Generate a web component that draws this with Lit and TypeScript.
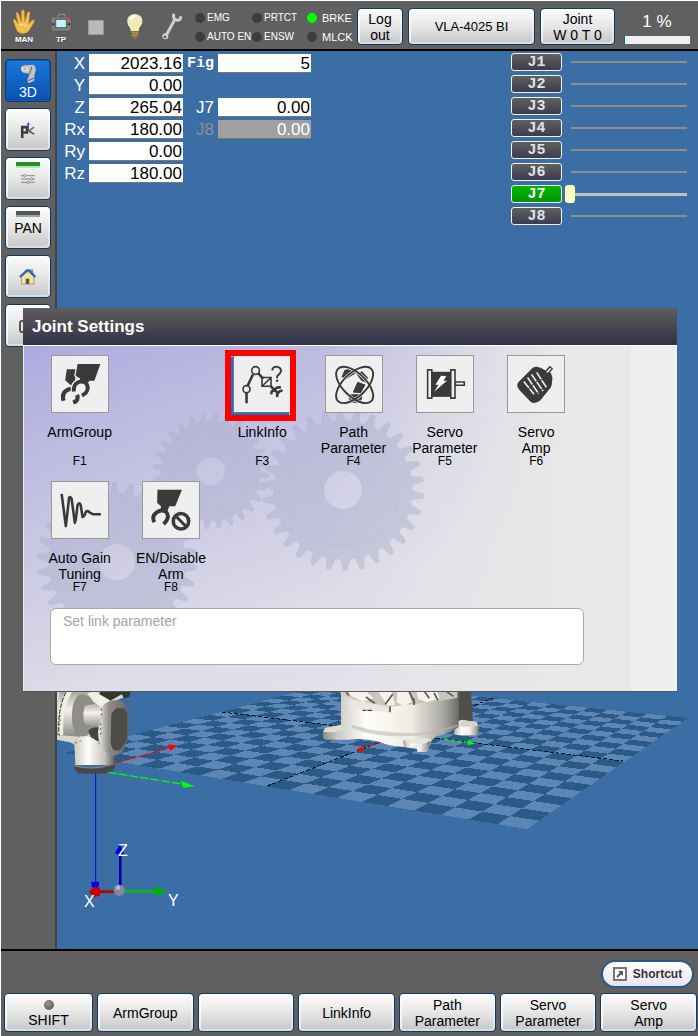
import { LitElement, html, svg, css, nothing } from "lit";
import type { SVGTemplateResult } from "lit";
import { customElement, property } from "lit/decorators.js";
import { classMap } from "lit/directives/class-map.js";

type Pt = [number, number];

/* Maps the unit square onto the quad a(0,0) b(1,0) c(1,1) d(0,1). */
function quadMap(a: Pt, b: Pt, c: Pt, d: Pt) {
  const dx1 = b[0] - c[0], dx2 = d[0] - c[0], dx3 = a[0] - b[0] + c[0] - d[0];
  const dy1 = b[1] - c[1], dy2 = d[1] - c[1], dy3 = a[1] - b[1] + c[1] - d[1];
  const det = dx1 * dy2 - dx2 * dy1;
  const g = (dx3 * dy2 - dx2 * dy3) / det;
  const h = (dx1 * dy3 - dx3 * dy1) / det;
  return (u: number, v: number): Pt => {
    const w = g * u + h * v + 1;
    return [
      ((b[0] - a[0] + g * b[0]) * u + (d[0] - a[0] + h * d[0]) * v + a[0]) / w,
      ((b[1] - a[1] + g * b[1]) * u + (d[1] - a[1] + h * d[1]) * v + a[1]) / w,
    ];
  };
}

const floor = quadMap([64, 753], [527, 829], [688, 718], [336, 682]);
const at = (u: number, v: number) => floor(u, v).map((n) => n.toFixed(1)).join(" ");
const TILES = 20;

function darkTiles(): string {
  let d = "";
  for (let i = 0; i < TILES; i++) {
    for (let j = 0; j < TILES; j++) {
      if ((i + j) % 2 !== 0) continue;
      const u = i / TILES, v = j / TILES, s = 1 / TILES;
      d += `M${at(u, v)}L${at(u + s, v)}L${at(u + s, v + s)}L${at(u, v + s)}Z`;
    }
  }
  return d;
}

function gearPath(cx: number, cy: number, r: number, hole: number, teeth: number): string {
  const tooth = r * 0.14;
  const step = (Math.PI * 2) / teeth;
  const p = (rad: number, ang: number) =>
    `${(cx + rad * Math.cos(ang)).toFixed(1)} ${(cy + rad * Math.sin(ang)).toFixed(1)}`;
  let d = "";
  for (let i = 0; i < teeth; i++) {
    const t = i * step;
    d += `${i ? "L" : "M"}${p(r - tooth, t)}L${p(r, t + step * 0.24)}L${p(r, t + step * 0.5)}L${p(r - tooth, t + step * 0.68)}`;
  }
  return `${d}ZM${cx - hole} ${cy}a${hole} ${hole} 0 1 0 ${hole * 2} 0a${hole} ${hole} 0 1 0 ${-hole * 2} 0Z`;
}

@customElement("robot-scene")
export class RobotScene extends LitElement {
  static styles = css`
    :host { display: block; overflow: hidden; }
    .view { display: block; width: 100%; height: 100%; }
    .axis-text { font: 16px "Liberation Sans", Arial, sans-serif; fill: #fff; }
  `;

  render() {
    return html`<svg class="view" viewBox="57 51 641 898" preserveAspectRatio="xMinYMax slice" role="img" aria-label="3D view of the robot">
      <defs>
        <linearGradient id="body"><stop offset="0" stop-color="#8b8b85"/><stop offset=".1" stop-color="#c9c8c2"/><stop offset=".32" stop-color="#fffef8"/><stop offset=".65" stop-color="#eeece4"/><stop offset=".88" stop-color="#aaa9a2"/><stop offset="1" stop-color="#6d6c67"/></linearGradient>
        <linearGradient id="neck"><stop offset="0" stop-color="#c8c7c0"/><stop offset=".35" stop-color="#fffef8"/><stop offset=".75" stop-color="#c4c3bb"/><stop offset="1" stop-color="#5f5e5a"/></linearGradient>
        <linearGradient id="drum" x2="0" y2="1"><stop offset="0" stop-color="#a6a59f"/><stop offset=".4" stop-color="#f4f2ea"/><stop offset="1" stop-color="#8b8a84"/></linearGradient>
        <linearGradient id="cap"><stop offset="0" stop-color="#eeece4"/><stop offset=".35" stop-color="#8f8e88"/><stop offset="1" stop-color="#65645f"/></linearGradient>
      </defs>
      <g shape-rendering="crispEdges">
        <path d="M64 753L527 829L688 718L336 682Z" fill="#5c86b4"/>
        <path d=${darkTiles()} fill="#2c5a88"/>
        <path d="M267 786L493 698M222 712L623 761" fill="none" stroke="#0c1620" stroke-dasharray="4 2"/>
      </g>

      <g transform="translate(280 685) scale(.3333)">
        <path d="M536 18H573L579 108L536 130Z" fill="#4f4e4a"/>
        <path d="M532 110L545 104L590 112L597 125V140L590 151H536L520 148Z" fill="url(#body)"/>
        <path d="M545 106L590 110L595 122L560 126L537 122Z" fill="#d5d3cb"/>
        <path d="M183 18H536V126Q500 150 470 153Q450 165 447 190L440 200H415L410 192L372 186Q340 184 318 178L290 168Q240 158 206 164H136L129 158V136L136 128L183 120Z" fill="url(#body)"/>
        <path d="M183 120L136 128L131 140Q160 146 190 134Z" fill="#dedcd4"/>
        <path d="M215 120Q320 150 440 143L536 118V124Q440 160 330 153Q260 149 215 128Z" fill="#b9b7ae" opacity=".55"/>
        <path d="M190 30L230 48L320 66L400 58L480 48L532 38V18H190Z" fill="#c8c6be"/>
        <path d="M213 50L230 46L330 66V82L213 72Z" fill="#e9e7df"/>
        <path d="M205 20H260L280 40L250 50L215 34ZM295 20H335L345 60L322 62ZM352 20H385L395 50L372 64L350 52ZM410 20H470L480 40L440 52L415 42Z" fill="#f5f3eb"/>
        <path d="M258 36L285 55M316 58L338 28M330 64V82M388 20L404 55M402 40V60M434 20L448 40M462 24L474 46M500 20L520 34M199 20L206 32" fill="none" stroke="#5a5954" stroke-width="5"/>
        <path d="M248 76H258M262 76H276" stroke="#111" stroke-width="3"/>
        <path d="M370 166L398 160L450 168L447 192L440 200H412V182L372 186Z" fill="url(#body)"/>
        <path d="M372 164L440 160L454 166L430 178L380 174Z" fill="#e6e4dc"/>
        <path d="M250 186L297 175" stroke="#f00" stroke-width="3" stroke-dasharray="10 4"/>
        <path d="M231 194L240 186L252 189L249 198L236 200Z" fill="#f00"/>
        <path d="M492 163L560 172" stroke="#0f0" stroke-width="4" stroke-dasharray="14 6"/>
        <path d="M562 165L588 176L562 180Z" fill="#0f0"/>
      </g>

      <g transform="translate(50 685) scale(.3333)">
        <path d="M21 20H235L240 30L225 35L190 50V200L170 170L100 178L82 182L60 172L21 164Z" fill="#d9d7cf"/>
        <path d="M150 20H242L238 36L222 40L215 28L180 48L145 40Z" fill="#35352f"/>
        <path d="M28 20H125L105 45L90 155L21 150Z" fill="url(#drum)"/>
        <path d="M48 20Q20 60 24 150H40Q36 70 66 20Z" fill="#efede5"/>
        <path d="M48 22Q22 70 27 152" fill="none" stroke="#22221f" stroke-width="3" stroke-dasharray="14 4"/>
        <path d="M100 28Q78 24 68 65Q60 130 84 154H108L148 130V46Z" fill="#8e8d87"/>
        <path d="M105 62Q95 90 105 118L155 130V52Z" fill="url(#drum)"/>
        <path d="M112 24L135 20L180 46L152 66L130 50Z" fill="#f1efe7"/>
        <path d="M115 136Q142 116 158 140L150 170L124 162Z" fill="#45443f"/>
        <path d="M72 164L102 155Q130 150 150 180L194 208V240H76Z" fill="url(#neck)"/>
        <path d="M160 60Q175 44 210 46Q236 54 237 110Q236 172 214 204L190 213L160 196Q146 186 144 140Z" fill="url(#cap)"/>
        <path d="M184 86L198 70H222L232 86V162L210 196H190L182 176Z" fill="#4c4b46"/>
        <path d="M154 72V98M152 116V150M76 174L92 168M30 90V120" stroke="#33332e" stroke-width="3" stroke-dasharray="4 10"/>
        <path d="M72 242Q130 256 194 236V252Q182 264 150 266H88Q74 262 72 242Z" fill="#48484a"/>
        <path d="M72 242Q130 258 194 236" fill="none" stroke="#84837d" stroke-width="4"/>
        <path d="M137 266V590" stroke="#00f" stroke-width="3"/>
        <path d="M124 590H147V602L140 612H130L124 602Z" fill="#00f"/>
        <path d="M190 236L356 190" stroke="#f00" stroke-width="3" stroke-dasharray="16 3"/>
        <path d="M354 178L384 182L360 197Z" fill="#f00"/>
        <path d="M175 262L395 297" stroke="#0f0" stroke-width="4" stroke-dasharray="26 6"/>
        <path d="M392 288L435 303L400 309Z" fill="#0f0"/>
        <path d="M211 608V505" stroke="#00a" stroke-width="8"/>
        <path d="M210 478L222 505L208 512L195 504Z" fill="#0000e6"/>
        <path d="M150 620H200" stroke="#c00000" stroke-width="8"/>
        <path d="M116 622L134 604L150 608V632L134 636Z" fill="#c80000"/>
        <path d="M220 619H318" stroke="#00c400" stroke-width="7"/>
        <path d="M315 602L351 621L315 634Z" fill="#00b000"/>
        <circle cx="208" cy="616" r="17" fill="#8584a0"/><circle cx="204" cy="608" r="7" fill="#b5b4c6"/>
      </g>
      <text class="axis-text" x="118" y="856">Z</text>
      <text class="axis-text" x="84" y="907">X</text>
      <text class="axis-text" x="168" y="906">Y</text>
    </svg>`;
  }
}

const DARK = "#3a3a3a";

const tileIcons: Record<string, SVGTemplateResult> = {
  arms: svg`<svg class="glyph" viewBox="63 45 174 174" aria-hidden="true">
    <path d="M109 86H138L134 128L124 138L104 120Z" fill=${DARK}/>
    <path d="M99 184Q90 154 122 147" fill="none" stroke=${DARK} stroke-width="13"/>
    <path d="M141 166Q148 182 129 190" fill="none" stroke=${DARK} stroke-width="13"/>
    <path d="M141 68H216L196 124H176L162 116H146L134 106Z" fill=${DARK} stroke="#efefef" stroke-width="4"/>
    <path d="M131 158Q126 130 148 124Q176 122 175 146Q173 160 158 168" fill="none" stroke="#efefef" stroke-width="18"/>
    <path d="M131 155Q128 132 148 125Q174 122 174 146Q172 160 156 168" fill="none" stroke=${DARK} stroke-width="12"/>
    <path d="M150 110H178V126H150Z" fill=${DARK}/>
  </svg>`,
  link: svg`<svg class="glyph" viewBox="611 45 174 174" aria-hidden="true">
    <g fill="none" stroke=${DARK} stroke-width="8">
      <path d="M650 192V160M654 136L670 102M686 98L702 116"/>
      <circle cx="650" cy="148" r="11" stroke-width="5"/><circle cx="678" cy="90" r="12" stroke-width="5"/>
      <path d="M698 112H726V139H698ZM698 139L726 112" stroke-width="5"/>
      <path d="M724 138L738 152M757 143Q740 140 738 152Q724 152 728 164M738 152L748 160Q742 164 747 172M748 160Q754 150 762 154"/>
      <path d="M730 90Q730 78 744 78Q757 80 757 92Q756 99 745 108V114" stroke-width="6"/>
    </g>
    <circle cx="745" cy="122" r="4" fill=${DARK}/>
  </svg>`,
  path: svg`<svg class="glyph" viewBox="48 45 174 174" aria-hidden="true">
    <path d="M106 88L134 84L142 98L112 116L96 110ZM142 100L160 92L178 112L174 128L158 122ZM146 126L170 134L156 160L132 158ZM124 164H160V178L150 190H132L118 178Z" fill=${DARK}/>
    <g fill="none" stroke="#efefef" stroke-width="10"><ellipse cx="137" cy="135" rx="72" ry="36" transform="rotate(44 137 135)"/><ellipse cx="137" cy="135" rx="72" ry="36" transform="rotate(-44 137 135)"/></g>
    <path d="M146 126L170 134L156 160L132 158Z" fill=${DARK}/>
    <g fill="none" stroke=${DARK} stroke-width="6"><ellipse cx="137" cy="135" rx="72" ry="36" transform="rotate(44 137 135)"/><ellipse cx="137" cy="135" rx="72" ry="36" transform="rotate(-44 137 135)"/></g>
  </svg>`,
  servo: svg`<svg class="glyph" viewBox="321 45 174 174" aria-hidden="true">
    <path d="M366 94H428V172H366Z" fill=${DARK}/>
    <path d="M354 88H367V176H354ZM426 88H439V176H426ZM440 126H468V136H440Z" fill="#efefef" stroke=${DARK} stroke-width="5"/>
    <path d="M396 106L412 108L403 122H414L374 156L388 134H378Z" fill="#fff"/>
  </svg>`,
  amp: svg`<svg class="glyph" viewBox="595 45 174 174" aria-hidden="true">
    <path d="M674 84Q684 78 698 86L712 94L726 100L730 112L728 134Q726 144 718 150L694 180Q680 192 668 186L634 150Q622 138 630 128L650 108Z" fill=${DARK} stroke=${DARK} stroke-width="6" stroke-linejoin="round"/>
    <path d="M714 98L730 80" stroke=${DARK} stroke-width="14"/><path d="M716 96L728 83" stroke="#efefef" stroke-width="5"/>
    <path d="M644 124L676 164M656 112L690 162M668 102L704 154M684 96L714 142" stroke="#efefef" stroke-width="5" stroke-dasharray="26 3"/>
  </svg>`,
  gain: svg`<svg class="glyph" viewBox="63 33 174 174" aria-hidden="true">
    <path d="M93 70L106 170Q112 120 116 82Q120 76 124 86L134 160Q138 150 142 106Q147 94 152 104L158 142Q164 140 168 126Q174 120 180 128L190 133H215" fill="none" stroke=${DARK} stroke-width="8" stroke-linejoin="round"/>
  </svg>`,
  disable: svg`<svg class="glyph" viewBox="340 33 174 174" aria-hidden="true">
    <path d="M385 57H461L440 108H422L416 122H394L396 108L384 98Z" fill=${DARK}/>
    <path d="M375 158Q366 138 382 128Q396 116 412 126Q426 142 404 164" fill="none" stroke=${DARK} stroke-width="12"/>
    <circle cx="458" cy="155" r="31" fill="#efefef"/>
    <circle cx="458" cy="155" r="24" fill="#efefef" stroke=${DARK} stroke-width="11"/>
    <path d="M442 139L474 171" stroke=${DARK} stroke-width="9"/>
  </svg>`,
};

@customElement("menu-tile")
export class MenuTile extends LitElement {
  @property() icon = "";
  @property() label = "";
  @property() shortcut = "";
  @property({ type: Boolean }) selected = false;

  static styles = css`
    :host { display: block; }
    .tile { display: flex; flex-direction: column; align-items: center; width: 100%; padding: 0; border: 0; background: none; color: #000; font: 14px/16px "Liberation Sans", Arial, sans-serif; }
    .frame { position: relative; box-sizing: border-box; width: 58px; height: 58px; border: 1px solid #999; background: #efefef; }
    .frame.selected { border-color: #777; box-shadow: -2px 2px 0 #0a78d4; }
    .frame.selected::after { content: ""; position: absolute; inset: -6px -6px -9px -9px; border: 6px solid #f00; }
    .glyph { display: block; width: 100%; height: 100%; }
    .label { height: 32px; margin-top: 11px; white-space: pre-line; }
    .key { font-size: 12px; line-height: 11px; }
  `;

  render() {
    return html`<button class="tile">
      <span class=${classMap({ frame: true, selected: this.selected })}>${tileIcons[this.icon]}</span>
      <span class="label">${this.label}</span><span class="key">${this.shortcut}</span>
    </button>`;
  }
}

const tiles = [
  { icon: "arms", label: "ArmGroup", key: "F1" },
  null,
  { icon: "link", label: "LinkInfo", key: "F3", selected: true },
  { icon: "path", label: "Path\nParameter", key: "F4" },
  { icon: "servo", label: "Servo\nParameter", key: "F5" },
  { icon: "amp", label: "Servo\nAmp", key: "F6" },
  { icon: "gain", label: "Auto Gain\nTuning", key: "F7" },
  { icon: "disable", label: "EN/Disable\nArm", key: "F8" },
];

@customElement("joint-settings")
export class JointSettings extends LitElement {
  static styles = css`
    :host { display: block; box-shadow: 0 1px 0 #555; }
    .title { margin: 0; padding: 0 9px; font: bold 17px/37px "Liberation Sans", Arial, sans-serif; color: #fff; background: linear-gradient(#5e5e5e, #4a4a50 45%, #30304a); border-bottom: 1px solid #fff; }
    .body { position: relative; overflow: hidden; padding: 9px 0 26px 10px; border-left: 1px solid #eee; box-sizing: border-box;
      background: linear-gradient(90deg, transparent 93%, #efefef 93%), linear-gradient(90deg, transparent 45%, #e8e8e8 82%), linear-gradient(160deg, #adabde 0%, #c6c5e2 32%, #dddce8 62%, #e8e8ec 100%); }
    .gears { position: absolute; left: 0; top: 0; width: 654px; height: 345px; }
    .tiles { position: relative; display: grid; grid-template-columns: repeat(6, 14.2%); row-gap: 14px; }
    .hint { position: relative; display: block; box-sizing: border-box; width: 83%; height: 57px; margin: 15px 0 0 16px; padding: 4px 12px; resize: none; border: 1px solid #aaa; border-radius: 6px; background: #fff; color: #a5a5a5; font: 14px/16px "Liberation Sans", Arial, sans-serif; outline: 0; }
  `;

  render() {
    return html`
      <h1 class="title">Joint Settings</h1>
      <div class="body">
        <svg class="gears" viewBox="23 346 654 345" aria-hidden="true">
          <g fill="#a9aecb" fill-opacity=".45" fill-rule="evenodd">
            <path d=${gearPath(210, 471, 58, 14, 28)}/>
            <path d=${gearPath(342, 490, 81, 19, 30)}/>
            <path d=${gearPath(116, 562, 80, 18, 30)}/>
          </g>
          <g fill="none" stroke="#9da3c4" stroke-opacity=".15">
            <circle cx="210" cy="471" r="39"/><circle cx="342" cy="490" r="56"/><circle cx="116" cy="562" r="55"/>
          </g>
        </svg>
        <div class="tiles">
          ${tiles.map((t) => t
            ? html`<menu-tile .icon=${t.icon} .label=${t.label} .shortcut=${t.key} .selected=${!!t.selected}></menu-tile>`
            : html`<span></span>`)}
        </div>
        <textarea class="hint" readonly aria-label="Description">Set link parameter</textarea>
      </div>`;
  }
}

const toolIcons = [
  { name: "Manual", icon: svg`<svg class="tool-icon" viewBox="38 30 72 100"><path d="M52 96L42 68Q41 60 47 63L56 76L50 46Q52 38 58 46L66 70L66 38Q71 30 75 38L77 70L84 42Q90 36 92 44L88 76L98 66Q106 62 106 69L90 96Q84 106 70 106Q58 106 52 96Z" fill="#f3bd4f" stroke="#b8822c" stroke-width="2"/><path d="M60 80Q68 76 84 84" fill="none" stroke="#fbdc8c" stroke-width="5"/></svg>`, text: "MAN" },
  { name: "Teach pendant", icon: svg`<svg class="tool-icon" viewBox="144 30 72 100"><path d="M168 56L174 48H190L194 56" fill="none" stroke="#8a8a8a" stroke-width="4"/><rect x="150" y="56" width="60" height="42" rx="6" fill="#7c8083" stroke="#555" stroke-width="2"/><rect x="164" y="63" width="32" height="25" fill="#c9f1fa" stroke="#4d5a60" stroke-width="3"/><circle cx="203" cy="60" r="5" fill="#e83a32"/><path d="M153 78H160M200 78H207" stroke="#333" stroke-width="6"/></svg>`, text: "TP" },
  { name: "Stop", icon: svg`<svg class="tool-icon" viewBox="257 30 72 100"><rect x="264" y="66" width="45" height="43" fill="#b9b9b9" stroke="#9c9c9c" stroke-width="2"/></svg>`, text: "" },
  { name: "Lamp", icon: svg`<svg class="tool-icon" viewBox="369 30 72 100"><path d="M392 98Q392 88 384 80Q378 62 388 53Q404 40 422 54Q432 66 424 80Q416 88 416 98Z" fill="#f2ebb8"/><path d="M392 64Q396 54 406 54" stroke="#fff" stroke-width="7" fill="none"/><path d="M394 98H416L413 114L405 124L397 114Z" fill="#94742f"/><path d="M394 104H415M396 111H413" stroke="#d9b765" stroke-width="2"/></svg>`, text: "" },
  { name: "Maintenance", icon: svg`<svg class="tool-icon" viewBox="480 30 72 100"><path d="M496 116L526 60M522 46Q516 62 532 66M530 66Q544 66 542 54" fill="none" stroke="#cfcfcf" stroke-width="9"/><circle cx="496" cy="114" r="9" fill="#cfcfcf"/><circle cx="495" cy="116" r="4" fill="#555"/></svg>`, text: "" },
];

const leds = [
  { text: "EMG" }, { text: "PRTCT" }, { text: "BRKE", on: true, wide: true },
  { text: "AUTO EN" }, { text: "ENSW" }, { text: "MLCK", wide: true },
];

const readouts = [
  [["X", "2023.16"], ["Fig", "5"]],
  [["Y", "0.00"]],
  [["Z", "265.04"], ["J7", "0.00"]],
  [["Rx", "180.00"], ["J8", "0.00"]],
  [["Ry", "0.00"]],
  [["Rz", "180.00"]],
];

const sliderBars = svg`<path d="M64 122H106M64 132H106M64 142H106" stroke="#8a8a8a" stroke-width="3"/><g fill="#d8d8d8" stroke="#808080" stroke-width="2"><circle cx="75" cy="122" r="4"/><circle cx="95" cy="132" r="4"/><circle cx="84" cy="142" r="4"/></g>`;

const sideItems = [
  { name: "3D", active: true, text: "3D", icon: svg`<svg class="robot" viewBox="60 38 52 62" aria-hidden="true"><path d="M62 52Q64 42 78 42L100 40Q110 44 108 60L104 74V90L86 98L82 88L90 68L76 66Q64 66 62 52Z" fill="#c9c6c2"/><path d="M66 50H84L82 60H68Z" fill="#f2eeea"/><path d="M70 54H80" stroke="#d44" stroke-width="3"/><path d="M90 68L96 46M84 90L102 82" stroke="#77736e" stroke-width="4"/></svg>` },
  { name: "Position", icon: svg`<svg class="small" viewBox="61 205 52 56" aria-hidden="true"><path d="M69 258V224H84V241H69" fill="none" stroke="#3c3c3c" stroke-width="8"/><path d="M88 236V214" stroke="#33c" stroke-width="3"/><path d="M83 217L88 209L93 217Z" fill="#33c"/><path d="M90 236L106 224" stroke="#2c9a4a" stroke-width="5"/><path d="M90 236L106 246" stroke="#b03030" stroke-width="5"/></svg>` },
  { name: "Adjust", bar: "green", icon: svg`<svg class="small" viewBox="58 108 54 48" aria-hidden="true">${sliderBars}</svg>` },
  { name: "Pan", bar: "gray", text: "PAN" },
  { name: "Home", icon: svg`<svg class="small" viewBox="59 270 54 54" aria-hidden="true"><path d="M66 296L86 280L104 296V318H66Z" fill="#f5e3a2" stroke="#8a7b4d" stroke-width="2"/><path d="M93 274H102V286H93Z" fill="#8a94ad"/><path d="M62 297L82 278Q86 276 90 278L108 297" fill="none" stroke="#2f62bd" stroke-width="7"/><path d="M79 302H90V318H79Z" fill="#5d584e"/></svg>` },
  { name: "Camera", icon: svg`<svg class="small" viewBox="0 0 18 18" aria-hidden="true"><rect x="1" y="4" width="16" height="11" rx="2" fill="none" stroke="#555" stroke-width="2"/><circle cx="9" cy="9" r="3" fill="#777"/></svg>` },
];

const footerKeys = ["ArmGroup", "", "LinkInfo", "Path\nParameter", "Servo\nParameter", "Servo\nAmp"];

@customElement("app-root")
export class AppRoot extends LitElement {
  static styles = css`
    :host { display: flex; flex-direction: column; box-sizing: border-box; min-height: 100vh; padding: 1px 0 0 1px; background: #fff; font: 14px/16px "Liberation Sans", Arial, sans-serif; color: #000; }
    button { font: inherit; color: inherit; padding: 0; }
    .key { box-sizing: border-box; border: 1px solid #0a3a6e; border-radius: 4px; background: linear-gradient(#fdfdfd, #e6e6e6 50%, #c6c6c6); box-shadow: inset 2px 2px 0 #ffffffb0, inset -2px -2px 0 #ffffff60; white-space: pre-line; text-align: center; }

    .top { display: flex; align-items: center; height: 48px; padding-left: 11px; background: #606060; border-bottom: 2px solid #000; }
    .tools { display: flex; gap: 13px; }
    .tool { position: relative; width: 24px; height: 34px; border: 0; background: none; }
    .tool-icon { display: block; width: 24px; height: 34px; overflow: visible; }
    .tool-text { position: absolute; left: -4px; right: -4px; bottom: -2px; color: #fff; font: bold 8px/8px "Liberation Sans", Arial, sans-serif; text-shadow: 0 1px 0 #444; }
    .leds { display: grid; grid-template-columns: 57px 55px 50px; row-gap: 3px; margin-left: 11px; padding-top: 5px; }
    .led { display: flex; align-items: center; gap: 2px; color: #fff; font-size: 10px; white-space: nowrap; }
    .led.wide { gap: 5px; font-size: 11px; }
    .dot { flex: none; width: 10px; height: 10px; border-radius: 50%; background: #3c3c3c; }
    .dot.on { background: #0f0; }
    .top-keys { display: flex; flex: 1; gap: 5px; height: 37px; padding-top: 3px; }
    .logout { width: 46px; }
    .model { flex: 1; font-size: 13px; }
    .mode { width: 75px; }
    .speed { display: flex; flex-direction: column; gap: 4px; width: 66px; margin: 0 8px 0 9px; text-align: center; color: #fff; font-size: 17px; line-height: 20px; padding-top: 6px; }
    .rate { display: block; width: 100%; height: 8px; appearance: none; border: 0; background: #efefef; }
    .rate::-webkit-progress-bar { background: #efefef; }
    .rate::-webkit-progress-value { background: #0a64b8; }

    .middle { display: flex; flex: 1; }
    .side { display: flex; flex-direction: column; gap: 6px; flex: none; width: 56px; box-sizing: border-box; padding: 8px 4px; background: #606060; border-right: 2px solid #444; }
    .side-key { display: flex; flex-direction: column; align-items: center; justify-content: center; position: relative; width: 46px; height: 43px; }
    .side-key.active { background: linear-gradient(#1a78d8, #0a50b0); box-shadow: inset 0 0 0 1px #0a5cc0; color: #fff; }
    .strip { position: absolute; top: 4px; left: 10px; right: 10px; height: 6px; }
    .strip.green { background: linear-gradient(#2c8c2c 60%, #a6f0b4 60%); }
    .strip.gray { background: linear-gradient(#4c5a5a 60%, #9ca4a4 60%); }
    .robot { width: 17px; height: 20px; margin-top: 2px; }
    .small { width: 18px; height: 18px; }

    .stage { position: relative; flex: 1; display: flex; justify-content: space-between; align-items: flex-start; background: #3b6ea5; }
    .scene { position: absolute; inset: 0; }
    .readouts { position: relative; display: grid; gap: 3px; padding: 3px 0 0 4px; font-size: 17px; line-height: 19px; color: #fff; }
    .row { display: grid; grid-template-columns: 24px 94px 27px 93px; column-gap: 4px; }
    .name { text-align: right; }
    .name.fig { font: bold 15px/19px "Liberation Mono", monospace; }
    .name.off { color: #8a8f96; }
    .value { box-sizing: border-box; width: 100%; height: 19px; padding: 0 1px; border: 0; border-bottom: 1px solid #777; border-radius: 0; background: #fff; color: #000; font: inherit; text-align: right; outline: 0; }
    .value.off { background: #a0a0a0; color: #fff; }
    .joints { position: relative; display: grid; gap: 4px; padding: 2px 9px 0 0; }
    .joint { display: flex; align-items: center; gap: 3px; height: 18px; }
    .joint-key { box-sizing: border-box; width: 51px; height: 18px; border: 1px solid #f2f2f2; border-radius: 3px; background: linear-gradient(#606060, #3c3c50); color: #e2e2e2; font: bold 15px/15px "Liberation Mono", monospace; }
    .joint-key.on { background: linear-gradient(#00b800, #009400); color: #fff; }
    .axis { appearance: none; width: 124px; height: 18px; margin: 0; background: linear-gradient(#8e8e8e, #8e8e8e) 6px 8px / 116px 2px no-repeat; }
    .axis.on { background: linear-gradient(#c0c0c0, #c0c0c0) 6px 8px / 116px 3px no-repeat; }
    .axis::-webkit-slider-thumb { appearance: none; width: 10px; height: 18px; border-radius: 3px; background: transparent; }
    .axis.on::-webkit-slider-thumb { background: #ffffc0; }
    .window { position: absolute; left: -34px; right: 21px; top: 257px; }

    .bottom { display: flex; flex-direction: column; align-items: flex-end; gap: 5px; padding: 9px 1px 4px 3px; background: #606060; border-top: 2px solid #000; }
    .shortcut { display: flex; align-items: center; justify-content: center; gap: 6px; box-sizing: border-box; width: 93px; height: 28px; margin-right: 3px; border: 2px solid #285a8a; border-radius: 14px; background: linear-gradient(#fff, #e6e4f2); color: #333; font-size: 12px; font-weight: bold; }
    .jump { width: 14px; height: 14px; }
    .keys { display: grid; grid-template-columns: 89px repeat(6, 1fr); gap: 4px; width: 100%; }
    .keys .key { height: 39px; }
    .shift { display: flex; flex-direction: column; align-items: center; justify-content: center; }
    .knob { width: 10px; height: 10px; margin: 2px 0; border-radius: 50%; background: radial-gradient(circle at 40% 35%, #999, #666 60%, #999); }
  `;

  private joint(n: number) {
    const on = n === 7;
    return html`<div class="joint">
      <button class=${classMap({ "joint-key": true, on })}>J${n}</button>
      <input class=${classMap({ axis: true, on })} aria-label=${`J${n} position`} type="range" min="0" max="100" .value=${"0"} ?disabled=${!on}>
    </div>`;
  }

  render() {
    return html`
      <header class="top">
        <div class="tools">${toolIcons.map((t) => html`<button class="tool" aria-label=${t.name}>${t.icon}${t.text ? html`<span class="tool-text">${t.text}</span>` : nothing}</button>`)}</div>
        <div class="leds">${leds.map((l) => html`<span class=${classMap({ led: true, wide: !!l.wide })}><span class=${classMap({ dot: true, on: !!l.on })}></span>${l.text}</span>`)}</div>
        <div class="top-keys">
          <button class="key logout">${"Log\nout"}</button>
          <button class="key model">VLA-4025 BI</button>
          <button class="key mode">${"Joint\nW 0 T 0"}</button>
        </div>
        <div class="speed"><label for="rate">1 %</label><progress class="rate" id="rate" max="100" value="1"></progress></div>
      </header>
      <main class="middle">
        <nav class="side">${sideItems.map((s) => html`<button class=${classMap({ key: true, "side-key": true, active: !!s.active })} aria-label=${s.name}>
          ${s.bar ? html`<span class=${`strip ${s.bar}`}></span>` : nothing}${s.icon ?? nothing}${s.text ? html`<span>${s.text}</span>` : nothing}</button>`)}
        </nav>
        <section class="stage">
          <robot-scene class="scene"></robot-scene>
          <div class="readouts">${readouts.map((row) => html`<div class="row">${row.map(([name, value]) => {
            const off = name === "J8";
            return html`<label class=${classMap({ name: true, off, fig: name === "Fig" })} for=${name}>${name}</label><input class=${classMap({ value: true, off })} id=${name} readonly .value=${value}>`;
          })}</div>`)}</div>
          <div class="joints">${[1, 2, 3, 4, 5, 6, 7, 8].map((n) => this.joint(n))}</div>
          <joint-settings class="window"></joint-settings>
        </section>
      </main>
      <footer class="bottom">
        <button class="shortcut"><svg class="jump" viewBox="0 0 14 14" aria-hidden="true"><rect x="1" y="1" width="12" height="12" fill="#fff" stroke="#777" stroke-width="2"/><path d="M4 10L8 6" stroke="#555" stroke-width="2"/><path d="M5 4H10V9Z" fill="#555"/></svg>Shortcut</button>
        <div class="keys">
          <button class="key shift"><span class="knob"></span>SHIFT</button>
          ${footerKeys.map((k) => html`<button class="key" aria-label=${k || "Unassigned"}>${k}</button>`)}
        </div>
      </footer>`;
  }
}
